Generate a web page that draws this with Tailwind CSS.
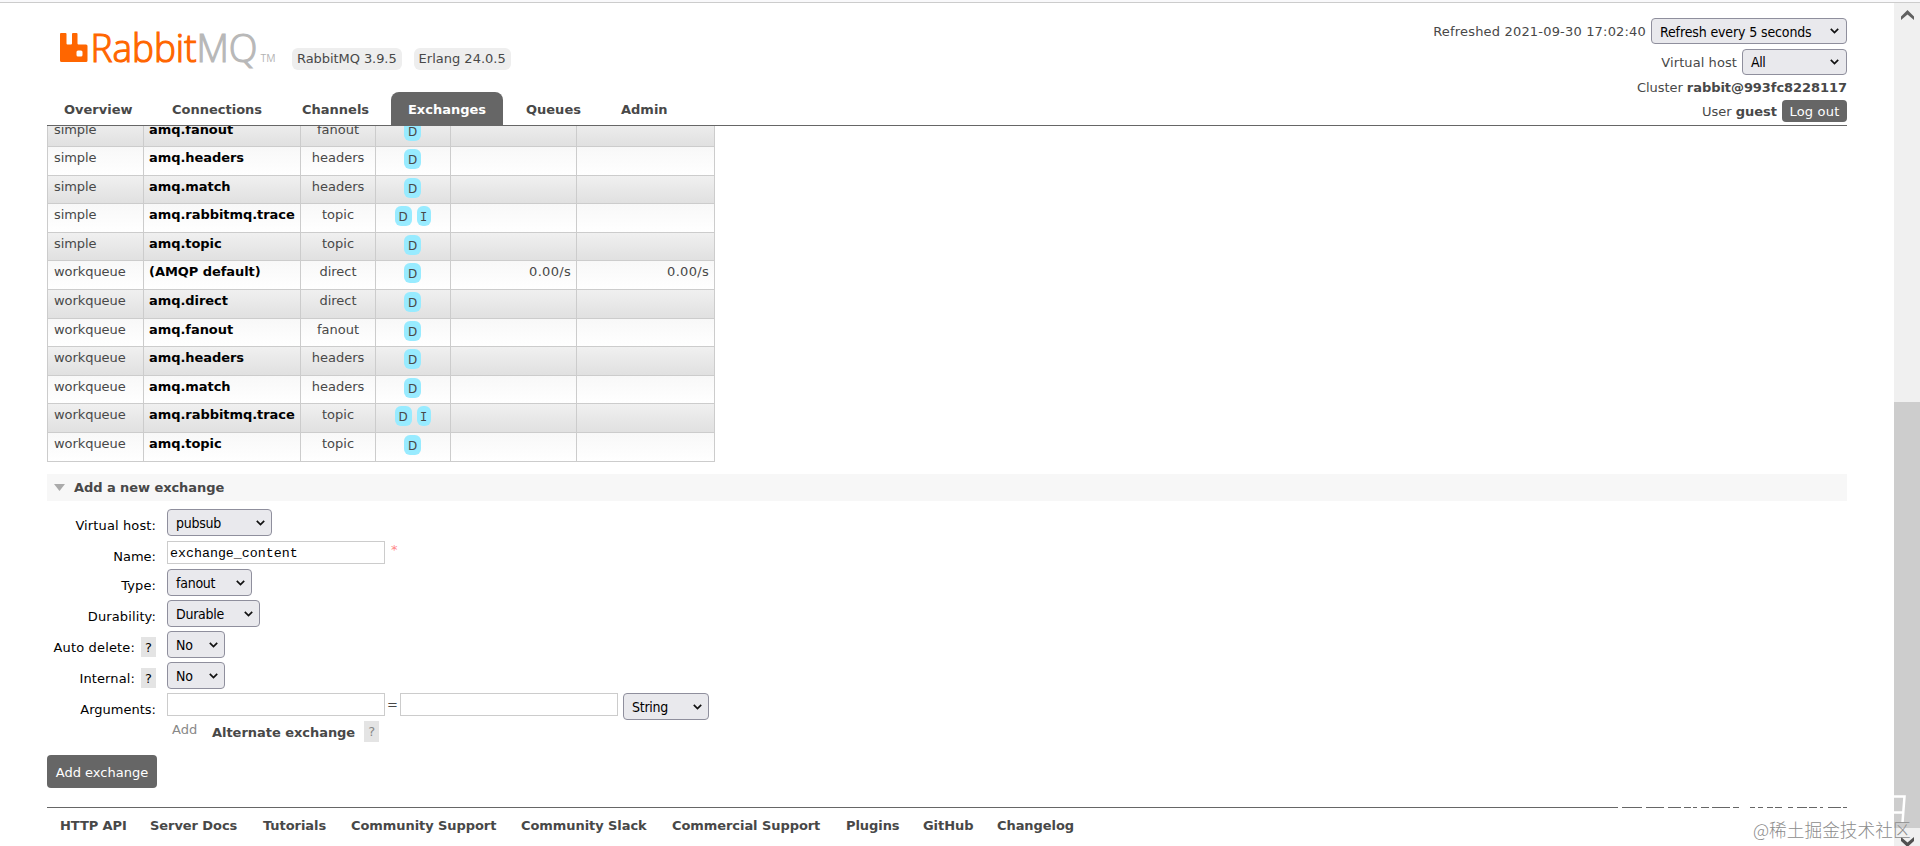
<!doctype html>
<html lang="en">
  <head>
    <meta charset="utf-8" />
    <meta name="viewport" content="width=device-width, initial-scale=1" />
    <title>RabbitMQ Management</title>
    <script src="https://cdn.jsdelivr.net/npm/@tailwindcss/browser@4"></script>
  </head>

  <body class="relative flex h-[846px] w-[1920px] overflow-hidden border-t-2 border-[#f9f9fb] bg-white font-['DejaVu_Sans',sans-serif] text-[13px] leading-4 text-[#484848]">
    <div class="flex grow flex-col border-t border-[#ccc] pr-[47px] pl-[47px]">
      <!-- Header -->
      <header class="flex h-[123px] shrink-0 justify-between border-b border-[#666]">
        <div class="flex flex-col justify-between">
          <div class="flex h-[70px] pl-[13px]">
            <svg class="mt-[9px] h-[61px] w-[216px]" viewBox="0 -20 216 61">
              <path fill="#f60" d="M1 1h4.500q1 0 1 1v9.500q0 1 1 1h3.500q1 0 1-1V2q0-1 1-1h3.500q1 0 1 1v9.500q0 1 1 1H26q1.500 0 1.500 1.500v14.500q0 1.500-1.500 1.500H1.500Q0 30 0 28.500V2q0-1 1-1zM18 18.500q-1.500 0-1.500 1.500v3q0 1.500 1.500 1.500h3q1.500 0 1.500-1.500v-3q0-1.500-1.500-1.500z" />
              <text x="30.500" y="30" font-family="Open Sans" font-size="38" font-weight="300" fill="#f60" stroke="#f60" stroke-width="1.200" textLength="106" lengthAdjust="spacingAndGlyphs">Rabbit</text>
              <text x="136.500" y="30" font-family="Open Sans" font-size="39" font-weight="300" fill="#b8b8b8" stroke="#b8b8b8" stroke-width="1.200" textLength="61" lengthAdjust="spacingAndGlyphs">MQ</text>
              <text x="200.500" y="30" font-family="Open Sans" font-size="10.500" fill="#b3b3b3" textLength="15" lengthAdjust="spacingAndGlyphs">TM</text>
            </svg>
            <div class="mt-[45px] ml-4 flex gap-3">
              <span class="flex h-[22px] items-center rounded-md bg-[#eee] px-[5px] tracking-[-0.07px]">RabbitMQ 3.9.5</span>
              <span class="flex h-[22px] items-center rounded-md bg-[#eee] px-[5px]">Erlang 24.0.5</span>
            </div>
          </div>
          <nav class="flex h-[33px] font-bold">
            <a class="flex w-[108px] items-center pt-[2px] pl-[17px]">Overview</a>
            <a class="flex w-[130px] items-center pt-[2px] pl-[17px]">Connections</a>
            <a class="flex w-[106px] items-center pt-[2px] pl-[17px]">Channels</a>
            <a class="flex w-[112px] items-center justify-center rounded-t-lg bg-[#666] pt-[2px] text-white">Exchanges</a>
            <a class="flex w-[95px] items-center pt-[2px] pl-[23px]">Queues</a>
            <a class="flex items-center pt-[2px] pl-[23px]">Admin</a>
          </nav>
        </div>

        <div class="flex flex-col items-end pt-[15px]">
          <div class="flex items-center">
            <span class="mr-[5px] pt-[2px] tracking-[0.18px]">Refreshed 2021-09-30 17:02:40</span>
            <button class="flex h-[26px] w-[196px] items-center justify-between rounded border border-[#8f8f9d] bg-[#e9e9ed] pr-[7px] pl-2 text-black">
              <span class="pt-px font-['DejaVu_Sans_Condensed','DejaVu_Sans',sans-serif] text-sm tracking-[-0.13px]">Refresh every 5 seconds</span>
              <svg class="h-[6px] w-[9px]" viewBox="0 0 9 6"><path d="M.8.8l3.700 3.700L8.200.8" fill="none" stroke="#111" stroke-width="1.700" /></svg>
            </button>
          </div>
          <div class="mt-[5px] flex items-center">
            <span class="mr-[5px] pt-px tracking-[0.08px]">Virtual host</span>
            <button class="flex h-[26px] w-[105px] items-center justify-between rounded border border-[#8f8f9d] bg-[#e9e9ed] pr-[7px] pl-2 text-black">
              <span class="font-['DejaVu_Sans_Condensed','DejaVu_Sans',sans-serif] text-sm tracking-[-0.4px]">All</span>
              <svg class="h-[6px] w-[9px]" viewBox="0 0 9 6"><path d="M.8.8l3.700 3.700L8.200.8" fill="none" stroke="#111" stroke-width="1.700" /></svg>
            </button>
          </div>
          <p class="mt-[5px] tracking-[-0.06px]">Cluster <b>rabbit@993fc8228117</b></p>
          <div class="mt-1 flex items-center">
            <span class="mr-[5px] pt-px">User <b>guest</b></span>
            <button class="flex h-[22px] w-[65px] items-center justify-center rounded bg-[#666] pt-px tracking-[0.2px] text-white">Log out</button>
          </div>
        </div>
      </header>

      <!-- Exchange list, scrolled under the header -->
      <div class="flex h-[336px] shrink-0 flex-col justify-end overflow-hidden">
        <table class="w-[668px] shrink-0 table-fixed border-collapse">
          <colgroup>
            <col class="w-[96px]" />
            <col class="w-[157px]" />
            <col class="w-[75px]" />
            <col class="w-[75px]" />
            <col class="w-[126px]" />
            <col class="w-[138px]" />
          </colgroup>
          <tbody id="exchanges"></tbody>
        </table>
      </div>

      <!-- Add a new exchange -->
      <h2 class="mt-3 flex h-[27px] shrink-0 items-center bg-[#f7f7f7] pl-[7px] font-bold tracking-[-0.07px]">
        <svg class="mr-[9px] h-[7px] w-[11px]" viewBox="0 0 11 7"><path d="M0 0h11L5.500 7z" fill="#aaa" /></svg>
        Add a new exchange
      </h2>

      <form class="mt-2 flex shrink-0 flex-col text-black">
        <div class="flex h-8">
          <label class="w-[109px] pt-[9px] text-right tracking-[0.12px]">Virtual host:</label>
          <span data-select="pubsub" class="ml-[11px] w-[105px]"></span>
        </div>
        <div class="flex h-7">
          <label class="w-[109px] pt-2 text-right">Name:</label>
          <input value="exchange_content" class="ml-[11px] h-[23px] w-[218px] border border-[#ccc] px-[2px] pt-[2px] font-['Liberation_Mono',monospace] text-[13.300px]" />
          <span class="ml-[6px] pt-px text-[#f88]">*</span>
        </div>
        <div class="flex h-[31px]">
          <label class="w-[109px] pt-[9px] text-right tracking-[0.12px]">Type:</label>
          <span data-select="fanout" class="ml-[11px] w-[85px]"></span>
        </div>
        <div class="flex h-[31px]">
          <label class="w-[109px] pt-[9px] text-right tracking-[0.12px]">Durability:</label>
          <span data-select="Durable" class="ml-[11px] w-[93px]"></span>
        </div>
        <div class="flex h-[31px]">
          <label class="flex w-[109px] items-start justify-end pt-[6px]"><span class="pt-[3px] tracking-[0.15px]">Auto delete:</span><span class="ml-[6px] h-5 w-[15px] bg-[#e4e4e4] pt-[3px] text-center">?</span></label>
          <span data-select="No" class="ml-[11px] w-[58px]"></span>
        </div>
        <div class="flex h-[31px]">
          <label class="flex w-[109px] items-start justify-end pt-[6px]"><span class="pt-[3px] tracking-[0.12px]">Internal:</span><span class="ml-[6px] h-5 w-[15px] bg-[#e4e4e4] pt-[3px] text-center">?</span></label>
          <span data-select="No" class="ml-[11px] w-[58px]"></span>
        </div>
        <div class="flex h-7">
          <label class="w-[109px] pt-[9px] text-right">Arguments:</label>
          <input class="ml-[11px] h-[23px] w-[218px] border border-[#ccc]" />
          <span class="w-[15px] pt-1 text-center text-[#484848]">=</span>
          <input class="h-[23px] w-[218px] border border-[#ccc]" />
          <span data-select="String" class="ml-[5px] w-[86px]"></span>
        </div>
        <div class="flex h-[34px] pl-[125px] text-[#888]">
          <span class="w-10 pt-[1px]">Add</span>
          <b class="pt-1 tracking-[-0.04px] text-[#484848]">Alternate exchange</b>
          <span class="ml-[9px] flex h-[21px] w-[15px] items-center justify-center bg-[#e4e4e4] pt-px">?</span>
        </div>
        <button type="button" class="h-[33px] w-[110px] rounded bg-[#666] pt-[2px] text-white">Add exchange</button>
      </form>

      <footer class="mt-[19px] flex border-t border-[#666] pt-[10px] pl-[13px] font-bold tracking-[-0.07px]">
        <a class="w-[90px]">HTTP API</a>
        <a class="w-[113px]">Server Docs</a>
        <a class="w-[88px]">Tutorials</a>
        <a class="w-[170px]">Community Support</a>
        <a class="w-[151px]">Community Slack</a>
        <a class="w-[174px]">Commercial Support</a>
        <a class="w-[77px]">Plugins</a>
        <a class="w-[74px]">GitHub</a>
        <a>Changelog</a>
      </footer>
    </div>

    <!-- Scrollbar -->
    <div class="flex w-[26px] shrink-0 flex-col items-center border-t border-[#ccc] bg-[#f0f0f0]">
      <svg class="mt-[7px] h-[10px] w-[13px] shrink-0" viewBox="0 0 13 10"><path d="M0 6.500L6.500 0 13 6.500V10L6.500 4.500 0 10z" fill="#606060" /></svg>
      <div class="mt-[382px] h-[426px] w-full shrink-0 bg-[#cdcdcd]"></div>
      <svg class="mt-[9px] h-[10px] w-[13px] shrink-0" viewBox="0 0 13 10"><path d="M0 0L6.500 5.500 13 0V4L6.500 10 0 4z" fill="#505050" /></svg>
    </div>

    <!-- White watermark strokes crossing the footer rule and the scrollbar -->
    <svg class="absolute top-[788px] left-[1600px] h-[40px] w-[320px]" viewBox="0 0 320 40">
      <path d="M18 17.500h4M42 17.500h4M64 17.500h4M81 17.500h3M91 17.500h2M97 17.500h4M109 17.500h3M130 17.500h3M139 17.500h11M155 17.500h3M163 17.500h4M173 17.500h2M182 17.500h6M193 17.500h4M207 17.500h2M217 17.500h3M223 17.500h5M241 17.500h2" fill="none" stroke="#fff" stroke-width="3" />
      <path d="M294 6.500h10.500l-2 26M294 22.500h9" fill="none" stroke="#fff" stroke-width="2.500" />
    </svg>
    <div class="absolute top-[815px] left-[1753px] text-[17.700px] leading-6 font-light whitespace-nowrap text-[#8c8c8c] font-['Noto_Sans_CJK_SC',sans-serif]">@稀土掘金技术社区</div>

    <script>
      // [vhost, name, type, features, row height, message rate]
      const rows = [
        ['simple', 'amq.fanout', 'fanout', 'D', 28],
        ['simple', 'amq.headers', 'headers', 'D', 29],
        ['simple', 'amq.match', 'headers', 'D', 28],
        ['simple', 'amq.rabbitmq.trace', 'topic', 'DI', 29],
        ['simple', 'amq.topic', 'topic', 'D', 28],
        ['workqueue', '(AMQP default)', 'direct', 'D', 29, '0.00/s'],
        ['workqueue', 'amq.direct', 'direct', 'D', 29],
        ['workqueue', 'amq.fanout', 'fanout', 'D', 28],
        ['workqueue', 'amq.headers', 'headers', 'D', 29],
        ['workqueue', 'amq.match', 'headers', 'D', 28],
        ['workqueue', 'amq.rabbitmq.trace', 'topic', 'DI', 29],
        ['workqueue', 'amq.topic', 'topic', 'D', 29],
      ];
      const td = 'border border-[#ccc] p-0 align-top';
      const badges = {
        D: `<span class="h-5 w-[17px] rounded-md bg-[#98ebff] pt-[3px] text-center text-xs leading-4">D</span>`,
        I: `<span class="h-5 w-[14px] rounded-md bg-[#98ebff] pt-[3px] text-center font-['DejaVu_Sans_Mono',monospace] text-xs leading-4">I</span>`,
      };
      document.getElementById('exchanges').innerHTML = rows
        .map(
          ([vhost, name, type, features, height, rate = '']) => `
          <tr class="odd:bg-linear-to-b odd:from-[#f0f0f0] odd:to-[#e0e0e0] even:bg-linear-to-b even:from-[#f8f8f8] even:to-white" style="height:${height}px">
            <td class="${td}"><div class="pt-[3px] pl-[6px] tracking-[-0.06px]">${vhost}</div></td>
            <td class="${td}"><div class="pt-[3px] pl-[5px] font-bold tracking-[-0.06px] whitespace-nowrap text-black">${name}</div></td>
            <td class="${td}"><div class="pt-[3px] text-center">${type}</div></td>
            <td class="${td}"><div class="flex justify-center gap-[5px] pt-[2px] pr-px">${[...features].map((f) => badges[f]).join('')}</div></td>
            <td class="${td}"><div class="pt-[3px] pr-[5px] text-right tracking-[0.3px]">${rate}</div></td>
            <td class="${td}"><div class="pt-[3px] pr-[5px] text-right tracking-[0.3px]">${rate}</div></td>
          </tr>`
        )
        .join('');

      document.querySelectorAll('[data-select]').forEach((el) => {
        el.innerHTML = `
          <button type="button" class="flex h-[27px] w-full items-center justify-between rounded border border-[#8f8f9d] bg-[#e9e9ed] pr-[6px] pl-2 text-black">
            <span class="font-['DejaVu_Sans_Condensed','DejaVu_Sans',sans-serif] text-sm tracking-[-0.25px]">${el.dataset.select}</span>
            <svg class="h-[6px] w-[9px]" viewBox="0 0 9 6"><path d="M.8.8l3.700 3.700L8.200.8" fill="none" stroke="#111" stroke-width="1.700" /></svg>
          </button>`;
      });
    </script>
  </body>
</html>
